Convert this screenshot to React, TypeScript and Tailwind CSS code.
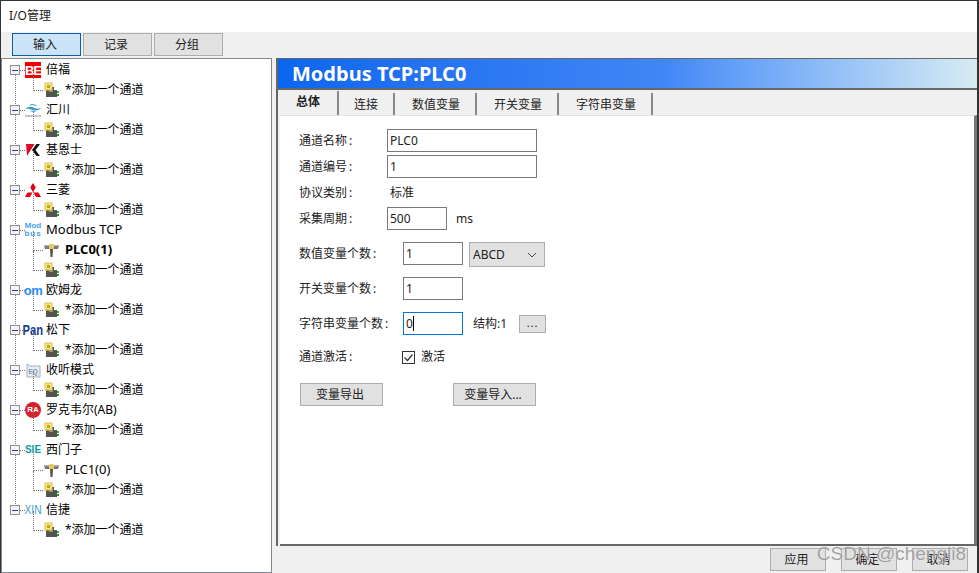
import React from "react";

const font = "font-['Noto_Sans','Noto_Sans_CJK_SC',sans-serif]";

const PlugIcon = () => (
  <svg width="16" height="16" viewBox="0 0 16 16" className="shrink-0">
    <path d="M2 8h2V5h6v3h3v7H2z" fill="#55554f" />
    <path d="M5 7h4v3H5z" fill="#8a8a84" />
    <rect x="1" y="1" width="7" height="7" fill="#f7e67e" stroke="#dcc24a" strokeWidth="1" />
    <rect x="3" y="3" width="3" height="3" fill="#c2a42a" />
    <rect x="13" y="9" width="2" height="2" fill="#2fae3a" />
    <rect x="13" y="12" width="2" height="2" fill="#1f9a2c" />
  </svg>
);

const TapIcon = () => (
  <svg width="16" height="16" viewBox="0 0 16 16" className="shrink-0">
    <path d="M0 3.500h15L14 7H1z" fill="#77746e" />
    <path d="M0 3.500h15v1H0z" fill="#a8a5a0" />
    <rect x="5" y="2" width="5" height="5" rx="1" fill="#e8c860" />
    <path d="M6 7h3l-.5 8h-2z" fill="#55524c" />
  </svg>
);

const BeLogo = () => (
  <span className="flex h-4 w-4 items-center justify-center overflow-hidden bg-[#f00000] font-['Liberation_Sans'] text-[13px] font-bold leading-none tracking-[-1px] text-white">
    BE
  </span>
);

const InoLogo = () => (
  <svg width="17" height="16" viewBox="0 0 17 16">
    <path d="M0 7c4-3 7-3 10-1 2 1 4 1 7 0-3 3-6 3-9 2C5 7 3 6 0 7z" fill="#3a9ac8" />
    <path d="M4 3c3-2 6-2 9 1-3-1-6-1-9-1z" fill="#4aa8d4" />
    <path d="M5 9c3-1 5 0 8 0-3 2-6 1-8 0z" fill="#7cc4e4" />
    <text x="0" y="15" fontSize="4" textLength="17" fill="#556" fontFamily="Liberation Sans">Inovance</text>
  </svg>
);

const KLogo = () => (
  <svg width="16" height="16" viewBox="0 0 16 16">
    <path d="M1 2h8.500L2 14z" fill="#d8102a" />
    <path d="M11.500 2H15L10.500 8l4.500 6h-3.500L7 8z" fill="#111" />
  </svg>
);

const MitsuLogo = () => (
  <svg width="16" height="16" viewBox="0 0 16 16">
    <path d="M8 1l2.800 4.500L8 10 5.200 5.500zM2.500 10.500h5L5 15H0zM8.500 10.500h5l2.500 4.500h-5z" fill="#e60012" />
  </svg>
);

const ModLogo = () => (
  <span className="flex flex-col items-center font-['Liberation_Sans'] text-[8px] font-bold leading-[8px] text-[#3ea2f2]">
    <span>Mod</span>
    <span className="tracking-[1px]">bus</span>
  </span>
);

const ListenLogo = () => (
  <svg width="16" height="16" viewBox="0 0 16 16">
    <path d="M2 2l3 2h10v11H2z" fill="#e8eef4" stroke="#9fb0c4" />
    <text x="3.500" y="12" fontSize="6.500" fontWeight="700" fill="#7f93aa" fontFamily="Liberation Sans">EQ</text>
  </svg>
);

const RaLogo = () => (
  <span className="flex h-4 w-4 items-center justify-center rounded-full bg-[#d8202c] font-['Liberation_Sans'] text-[8px] font-bold text-white">
    RA
  </span>
);

const tree: { logo: React.ReactNode; name: string; latin?: boolean; channels?: { label: string; bold?: boolean }[] }[] = [
  { logo: <BeLogo />, name: "倍福" },
  { logo: <InoLogo />, name: "汇川" },
  { logo: <KLogo />, name: "基恩士" },
  { logo: <MitsuLogo />, name: "三菱" },
  { logo: <ModLogo />, name: "Modbus TCP", latin: true, channels: [{ label: "PLC0(1)", bold: true }] },
  { logo: <span className="font-['Liberation_Sans'] text-[13px] font-semibold leading-none tracking-[-0.5px] text-[#2a8cf4]">om</span>, name: "欧姆龙" },
  { logo: <span className="scale-x-[0.8] font-['Liberation_Sans'] text-[14px] font-bold leading-none text-[#16408f]">Pan</span>, name: "松下" },
  { logo: <ListenLogo />, name: "收听模式" },
  { logo: <RaLogo />, name: "罗克韦尔(AB)" },
  { logo: <span className="font-['Liberation_Sans'] text-[10px] font-bold leading-none text-[#0f9aa6]">SIE</span>, name: "西门子", channels: [{ label: "PLC1(0)" }] },
  { logo: <span className="scale-x-[0.85] font-['Liberation_Sans'] text-[12px] leading-none text-[#3b9fd8]">XIN</span>, name: "信捷" },
];

const ChildRow = ({ icon, children }: { icon: React.ReactNode; children: React.ReactNode }) => (
  <div className="flex h-5 items-center text-[12px] leading-5 text-black">
    <span className="mb-[9px] ml-[31px] h-[20px] w-[10px] shrink-0 self-end border-b border-l border-dotted border-[#777]" />
    <span className="ml-px">{icon}</span>
    <span className="ml-[5px]">{children}</span>
  </div>
);

const Field = ({ value, w, focus }: { value: string; w: string; focus?: boolean }) => (
  <div className={`flex h-[23px] items-center border bg-white px-[2px] text-[12px] text-[#222] ${w} ${focus ? "border-[#0078d7]" : "border-[#7a7a7a]"}`}>
    {value}
    {focus && <span className="h-[15px] w-px bg-black" />}
  </div>
);

const Button = ({ children, className }: { children: React.ReactNode; className: string }) => (
  <button className={`flex h-[23px] items-center justify-center border border-[#adadad] bg-[#e1e1e1] pr-[3px] text-[12px] text-[#222] ${className}`}>
    {children}
  </button>
);

const Label = ({ text, w }: { text: string; w: string }) => (
  <span className={`flex h-[23px] shrink-0 items-center ${w}`}>
    {text}
    <span className="ml-[2px]">:</span>
  </span>
);

const tabs = [
  { label: "连接", w: "w-[56px]" },
  { label: "数值变量", w: "w-[82px] pl-[2px]" },
  { label: "开关变量", w: "w-[82px] pl-[2px]" },
  { label: "字符串变量", w: "w-[94px] pl-[2px]" },
];

export default function App() {
  return (
    <div className={`relative flex h-[573px] w-[979px] flex-col overflow-hidden border-t border-r-2 border-l border-t-[#333] border-r-[#333] border-l-[#333] bg-[#f0f0f0] ${font}`}>
      <div className="flex h-[31px] shrink-0 items-center bg-white pb-[2px] pl-2 text-[12px] text-[#222]">I/O管理</div>

      <div className="flex h-[26px] shrink-0 gap-[2px] pt-[1px] pl-[11px]">
        <Button className="w-[69px] !border-[#0a5fa8] !bg-[#cce4f7]">输入</Button>
        <Button className="w-[69px]">记录</Button>
        <Button className="w-[69px]">分组</Button>
      </div>

      <div className="flex min-h-0 flex-1">
        {/* tree */}
        <div className="relative h-[515px] w-[271px] shrink-0 border border-[#828790] bg-white pt-px">
          <div className="absolute top-[16px] left-[13px] h-[435px] border-l border-dotted border-[#777]" />
          {tree.map((group) => (
            <div key={group.name}>
              <div className="flex h-5 items-center text-[12px] leading-5 text-black">
                <span className="relative z-10 ml-[8px] flex h-[10px] w-[10px] shrink-0 items-center justify-center border border-[#919191] bg-[#f4f4f4]">
                  <span className="h-px w-[6px] bg-[#2a3f8f]" />
                </span>
                <span className="w-[5px] border-t border-dotted border-[#777]" />
                <span className="flex w-4 shrink-0 items-center justify-center">{group.logo}</span>
                <span className={`ml-[5px] ${group.latin ? "-translate-y-px text-[13px]" : ""}`}>{group.name}</span>
              </div>
              {group.channels?.map((c) => (
                <ChildRow key={c.label} icon={<TapIcon />}>
                  <span className={`inline-block -translate-y-px text-[13px] ${c.bold ? "font-bold" : ""}`}>{c.label}</span>
                </ChildRow>
              ))}
              <ChildRow icon={<PlugIcon />}>*添加一个通道</ChildRow>
            </div>
          ))}
        </div>

        {/* detail */}
        <div className="ml-1 flex w-[701px] flex-col">
          <div className="flex h-[488px] flex-col border-t border-l-2 border-[#666]">
            <div className="flex h-[31px] shrink-0 items-center border-b-2 border-[#666] bg-gradient-to-r from-[#0a66ee] via-[#4086f6] via-55% to-[#d6ecf2] pl-[14px] text-[20px] font-bold text-white">
              Modbus TCP:PLC0
            </div>
            <div className="flex h-[25px] shrink-0 items-end pl-[1px]">
              <div className="flex h-[24px] w-[60px] items-center justify-center border-r-2 border-[#888] pb-[2px] text-[12px] font-bold text-[#222]">总体</div>
              {tabs.map((t) => (
                <div key={t.label} className={`flex h-[22px] items-center justify-center border-r-2 border-[#888] pt-[2px] text-[12px] text-[#222] ${t.w}`}>
                  {t.label}
                </div>
              ))}
            </div>
            <div className="ml-[2px] flex flex-1 flex-col border-t border-r-[3px] border-b-2 border-[#e3e3e3] border-r-[#777] border-b-[#666] bg-white pt-[13px] pl-[19px] text-[12px] text-[#222]">
              <div className="flex h-[23px] items-center">
                <Label text="通道名称" w="w-[88px]" />
                <Field value="PLC0" w="w-[150px]" />
              </div>
              <div className="mt-[3px] flex h-[23px] items-center">
                <Label text="通道编号" w="w-[88px]" />
                <Field value="1" w="w-[150px]" />
              </div>
              <div className="flex h-[29px] items-center">
                <Label text="协议类别" w="w-[91px]" />
                <span>标准</span>
              </div>
              <div className="flex h-[23px] items-center">
                <Label text="采集周期" w="w-[88px]" />
                <Field value="500" w="w-[60px]" />
                <span className="ml-[9px]">ms</span>
              </div>
              <div className="mt-3 flex h-[23px] items-start">
                <Label text="数值变量个数" w="w-[104px]" />
                <Field value="1" w="w-[60px]" />
                <div className="ml-[6px] flex h-[25px] w-[76px] items-center justify-between border border-[#adadad] bg-[#e1e1e1] pr-[7px] pl-[3px]">
                  <span>ABCD</span>
                  <svg width="10" height="6" viewBox="0 0 10 6" fill="none" stroke="#444">
                    <path d="M1 1l4 4 4-4" />
                  </svg>
                </div>
              </div>
              <div className="mt-3 flex h-[23px] items-center">
                <Label text="开关变量个数" w="w-[104px]" />
                <Field value="1" w="w-[60px]" />
              </div>
              <div className="mt-3 flex h-[23px] items-center">
                <Label text="字符串变量个数" w="w-[104px]" />
                <Field value="0" w="w-[60px]" focus />
                <span className="ml-[10px]">结构:1</span>
                <button className="ml-[12px] flex h-[18px] w-[27px] items-center justify-center border border-[#adadad] bg-[#e1e1e1] text-[11px] tracking-[1px]">...</button>
              </div>
              <div className="mt-[15px] flex h-[14px] items-center">
                <Label text="通道激活" w="w-[103px]" />
                <span className="flex h-[13px] w-[13px] items-center justify-center border border-[#333] bg-white">
                  <svg width="11" height="11" viewBox="0 0 11 11" fill="none" stroke="#333" strokeWidth="1.200">
                    <path d="M1.500 5.500l3 3 5-6" />
                  </svg>
                </span>
                <span className="ml-[6px]">激活</span>
              </div>
              <div className="mt-[19px] ml-px flex gap-[70px]">
                <Button className="w-[83px]">变量导出</Button>
                <Button className="w-[83px]">变量导入...</Button>
              </div>
            </div>
          </div>
          <div className="flex justify-end gap-[15px] pt-[2px] pr-[9px]">
            <Button className="w-[56px]">应用</Button>
            <Button className="w-[56px]">确定</Button>
            <Button className="w-[56px]">取消</Button>
          </div>
        </div>
      </div>

      <div className="absolute right-[11px] bottom-[9px] font-['Liberation_Sans'] text-[19px] leading-5 text-[#9a9a9a] opacity-90 [text-shadow:0_0_1px_#fff]">
        CSDN @chengli8
      </div>
    </div>
  );
}
